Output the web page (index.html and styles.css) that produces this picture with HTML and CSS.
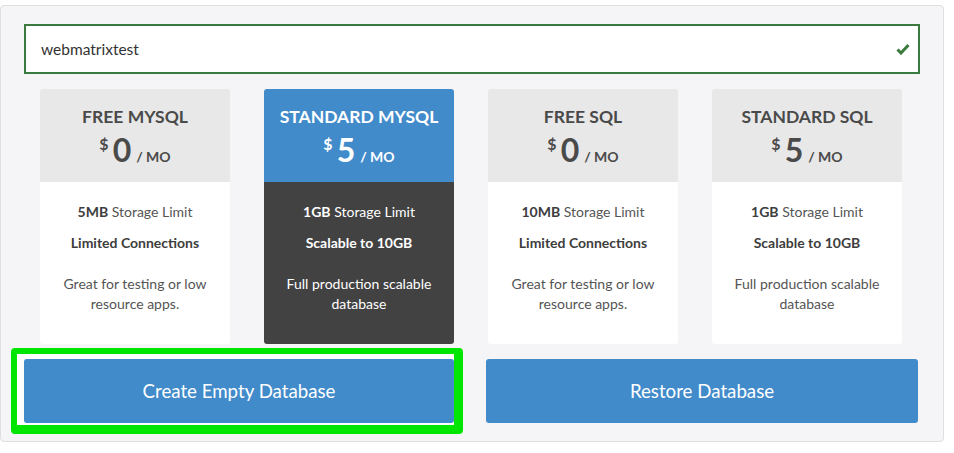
FILE: index.html
```html
<!DOCTYPE html>
<html>
<head>
<meta charset="utf-8">
<link rel="stylesheet" href="styles.css">
</head>
<body>
<div class="panel">
  <div class="field">
    <span class="field-text">webmatrixtest</span>
    <svg class="check" width="14" height="12" viewBox="0 0 14 12"><path d="M1.5 6.5 L5 10 L12.5 2" fill="none" stroke="#3b7a3e" stroke-width="3"/></svg>
  </div>
  <div class="plans">
    <div class="plan">
      <div class="plan-head">
        <div class="plan-title">FREE MYSQL</div>
        <div class="price"><span class="cur">$</span><span class="amt">0</span><span class="per">/ MO</span></div>
      </div>
      <div class="plan-body">
        <p><b>5MB</b> Storage Limit</p>
        <p><b>Limited Connections</b></p>
        <p class="desc">Great for testing or low resource apps.</p>
      </div>
    </div>
    <div class="plan selected">
      <div class="plan-head">
        <div class="plan-title">STANDARD MYSQL</div>
        <div class="price"><span class="cur">$</span><span class="amt">5</span><span class="per">/ MO</span></div>
      </div>
      <div class="plan-body">
        <p><b>1GB</b> Storage Limit</p>
        <p><b>Scalable to 10GB</b></p>
        <p class="desc">Full production scalable database</p>
      </div>
    </div>
    <div class="plan">
      <div class="plan-head">
        <div class="plan-title">FREE SQL</div>
        <div class="price"><span class="cur">$</span><span class="amt">0</span><span class="per">/ MO</span></div>
      </div>
      <div class="plan-body">
        <p><b>10MB</b> Storage Limit</p>
        <p><b>Limited Connections</b></p>
        <p class="desc">Great for testing or low resource apps.</p>
      </div>
    </div>
    <div class="plan">
      <div class="plan-head">
        <div class="plan-title">STANDARD SQL</div>
        <div class="price"><span class="cur">$</span><span class="amt">5</span><span class="per">/ MO</span></div>
      </div>
      <div class="plan-body">
        <p><b>1GB</b> Storage Limit</p>
        <p><b>Scalable to 10GB</b></p>
        <p class="desc">Full production scalable database</p>
      </div>
    </div>
  </div>
  <div class="actions">
    <button class="btn">Create Empty Database</button>
    <button class="btn">Restore Database</button>
    <div class="highlight"></div>
  </div>
</div>
</body>
</html>
```
FILE: styles.css
```css
html, body {
  margin: 0;
  padding: 0;
  background: #ffffff;
}
body {
  font-family: Lato, "Open Sans", sans-serif;
  color: #444;
}
.panel {
  box-sizing: border-box;
  width: 944px;
  margin-top: 5px;
  background: #f5f5f7;
  border: 1px solid #dfdfe2;
  border-radius: 4px;
  padding: 18px 23px 18px 23px;
}
.field {
  box-sizing: border-box;
  width: 896px;
  height: 50px;
  background: #fff;
  border: 2px solid #3b7a3e;
  display: flex;
  align-items: center;
  justify-content: space-between;
  padding: 0 8px 0 15px;
}
.field-text {
  font-size: 15.5px;
  color: #333;
}
.check {
  display: block;
}
.plans {
  display: flex;
  gap: 34px;
  padding: 0 16px;
  margin-top: 15px;
}
.plan {
  width: 190px;
  height: 255px;
  border-radius: 3px;
  overflow: hidden;
  display: flex;
  flex-direction: column;
}
.plan-head {
  height: 93px;
  background: #e8e8e8;
  color: #4a4a4a;
  text-align: center;
  box-sizing: border-box;
  padding-top: 17px;
}
.plan-title {
  font-weight: 700;
  font-size: 17.5px;
  line-height: 22px;
}
.price {
  margin-top: -1px;
  line-height: 34px;
}
.cur {
  font-size: 16px;
  font-weight: 700;
  vertical-align: 12px;
  margin-right: 4px;
}
.amt {
  font-size: 32px;
  font-weight: 700;
  margin-right: 5px;
}
.per {
  font-size: 14px;
  font-weight: 700;
}
.plan-body {
  flex: 1;
  background: #fff;
  color: #555;
  text-align: center;
  padding: 20px 16px 0;
  font-size: 14px;
  line-height: 20px;
}
.plan-body p {
  margin: 0 0 11px;
}
.plan-body b {
  color: #3d3d3d;
}
.plan-body p.desc {
  margin-top: 21px;
}
.selected .plan-head {
  background: #428bca;
  color: #fff;
}
.selected .plan-body {
  background: #424242;
  color: #fff;
}
.selected .plan-body b {
  color: #fff;
}
.actions {
  position: relative;
  display: grid;
  grid-template-columns: 430px 432px;
  gap: 32px;
  margin-top: 15px;
}
.btn {
  height: 64px;
  border: 0;
  border-radius: 3px;
  background: #428bca;
  color: #fff;
  font-family: Lato, "Open Sans", sans-serif;
  font-size: 18.7px;
  padding: 0;
}
.highlight {
  position: absolute;
  left: -13px;
  top: -11px;
  width: 452px;
  height: 86px;
  box-sizing: border-box;
  border-style: solid;
  border-color: #00e600;
  border-width: 6px 9px 9px 6px;
  border-radius: 4px;
  box-shadow: inset 7px 5px 0 #fff, inset 0 -2px 0 #fff;
  pointer-events: none;
}
```
